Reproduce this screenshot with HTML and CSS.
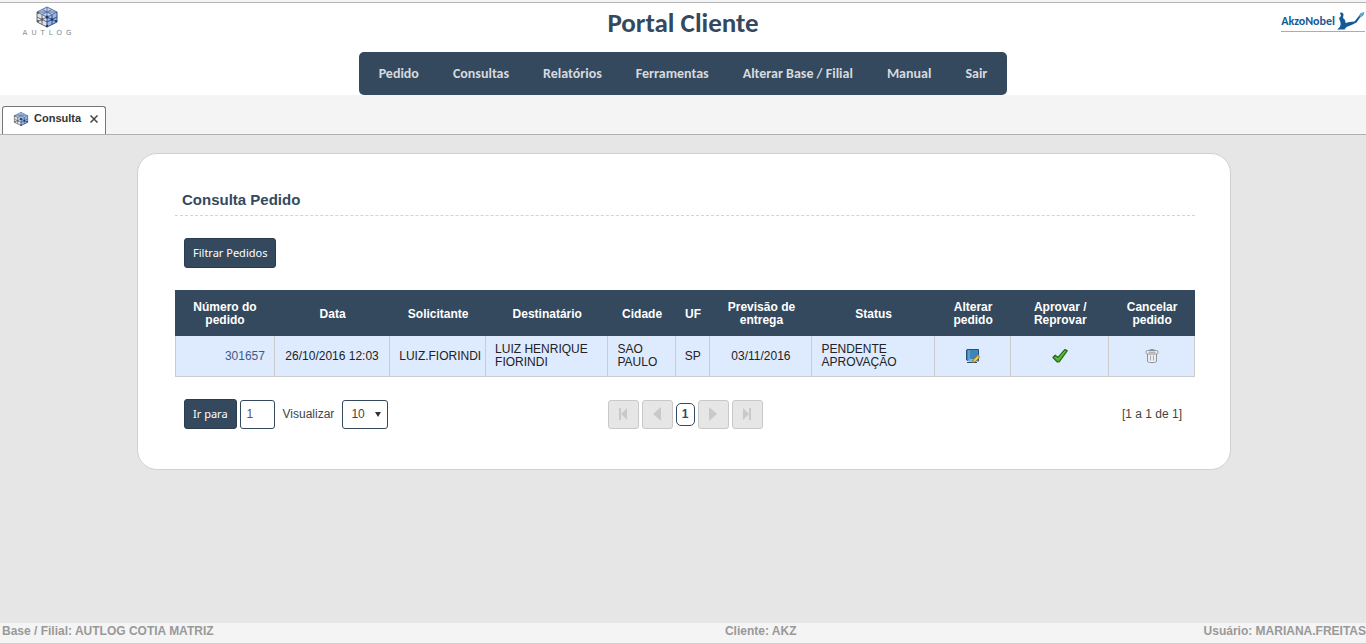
FILE: index.html
```html
<!DOCTYPE html>
<html lang="pt-BR">
<head>
<meta charset="utf-8">
<title>Portal Cliente</title>
<link rel="stylesheet" href="styles.css">
</head>
<body>
<svg class="defs" aria-hidden="true">
  <symbol id="cube" viewBox="0 0 24 22">
    <path d="M12 1 22 6 12 11 2 6z" fill="#c3d4ec"/>
    <path d="M2 6 12 11V21L2 16z" fill="#dfe1e4"/>
    <path d="M22 6 12 11V21L22 16z" fill="#9db6e0"/>
    <g fill="none">
      <path d="M12 1 2 6 12 11 22 6zM7 3.500 17 8.500M17 3.500 7 8.500M12 1V11M2 6H22" stroke="#5673a8"/>
      <path d="M2 6V16L12 21M7 8.500V18.500M2 11 12 16M2 16 12 11" stroke="#686d76"/>
      <path d="M22 6V16L12 21M12 11V21M17 8.500V18.500M22 11 12 16M22 16 12 11" stroke="#2d4c8f"/>
    </g>
    <g fill="#1e3768"><circle cx="12" cy="11" r="1.500"/><circle cx="12" cy="20" r="1.200"/><circle cx="21" cy="15" r="1.100"/><circle cx="17" cy="13.500" r="1.200"/></g>
    <g fill="#555a62"><circle cx="3" cy="7" r="1.100"/><circle cx="3" cy="15" r="1.100"/><circle cx="7" cy="13.500" r="1.200"/></g>
  </symbol>
</svg>
<header class="header">
  <div class="brand-row">
    <div class="autlog">
      <svg class="autlog-cube" aria-hidden="true"><use href="#cube"/></svg>
      <span class="autlog-name">AUTLOG</span>
    </div>
    <h1 class="title">Portal Cliente</h1>
    <div class="akzo">
      <span class="akzo-name">AkzoNobel</span>
      <svg class="akzo-figure" viewBox="0 0 28 20" aria-hidden="true">
        <path d="M3 2c2-1 3.500 0 3.500 2L6 7c2 1 2.500 3 2.500 5l4-1 5-.5 4-5 2-3 3.500-1-1 3-3 2-3.500 5-5 2.500-5 2-2 2.500H0c3-2 4-4 3.500-7L2 7l2-2z" fill="#155a97"/>
        <path d="m22 5 2-3 3.500-1-1 3-3 2z" fill="#5fa9d6"/>
      </svg>
    </div>
  </div>
  <nav class="menu">
    <a href="#">Pedido</a><a href="#">Consultas</a><a href="#">Relatórios</a><a href="#">Ferramentas</a><a href="#">Alterar Base / Filial</a><a href="#">Manual</a><a href="#">Sair</a>
  </nav>
</header>
<div class="tabs">
  <div class="tab">
    <svg class="tab-icon" aria-hidden="true"><use href="#cube"/></svg>
    <a class="tab-label" href="#">Consulta</a>
    <button class="tab-close" type="button" aria-label="Fechar"><svg viewBox="0 0 8 8"><path d="M.5.5l7 7M7.500.5l-7 7" stroke="#444" stroke-width="1.500"/></svg></button>
  </div>
</div>
<main class="content">
  <section class="card">
    <h2 class="card-title">Consulta Pedido</h2>
    <button class="btn filter" type="button">Filtrar Pedidos</button>
    <table class="orders">
      <colgroup><col class="c-num"><col class="c-date"><col class="c-req"><col class="c-dest"><col class="c-city"><col class="c-uf"><col class="c-eta"><col class="c-status"><col class="c-edit"><col class="c-ok"><col class="c-del"></colgroup>
      <thead>
        <tr><th>Número do<br>pedido</th><th>Data</th><th>Solicitante</th><th>Destinatário</th><th>Cidade</th><th>UF</th><th>Previsão de<br>entrega</th><th>Status</th><th>Alterar<br>pedido</th><th>Aprovar /<br>Reprovar</th><th>Cancelar<br>pedido</th></tr>
      </thead>
      <tbody>
        <tr>
          <td class="right"><a href="#">301657</a></td>
          <td class="center">26/10/2016 12:03</td>
          <td>LUIZ.FIORINDI</td>
          <td>LUIZ HENRIQUE<br>FIORINDI</td>
          <td>SAO<br>PAULO</td>
          <td>SP</td>
          <td class="center">03/11/2016</td>
          <td>PENDENTE<br>APROVAÇÃO</td>
          <td class="center"><button class="icon-btn" type="button" aria-label="Alterar pedido">
            <svg viewBox="0 0 16 16"><path d="M2 1.500h11.500v11.500H3.500L1.500 12V2z" fill="#3d86b8" stroke="#1d527f"/><path d="M4 2v9.500h9" fill="none" stroke="#7fb7dc"/><path d="M2.500 13h10" stroke="#e7eef4"/><path d="M2 14.500h10" stroke="#1d527f"/><path d="m7.500 14.500.8-2.800 4.200-4.200 2 2-4.200 4.200z" fill="#f1c83f" stroke="#8a6a2c" stroke-width=".8"/><path d="m12 8 1.200-1.200 2 2L14 10z" fill="#d98b5c"/></svg></button></td>
          <td class="center"><button class="icon-btn" type="button" aria-label="Aprovar ou reprovar">
            <svg viewBox="0 0 16 16"><path d="M1 9.500 3.200 7.200 6 9.500 13 1.500l2.300 1.200L7.200 14H5.300z" fill="#4fb02b" stroke="#256b19" stroke-width="1.200" stroke-linejoin="round"/><path d="M3 8.800l3 2.500 7-8.300" fill="none" stroke="#74cc4c" stroke-width=".8"/></svg></button></td>
          <td class="center"><button class="icon-btn" type="button" aria-label="Cancelar pedido">
            <svg viewBox="0 0 16 16" fill="none" stroke="#8d9096"><path d="M3.500 6v7.500c1 1.500 8 1.500 9 0V6" fill="#eceef0"/><rect x="2" y="2.500" width="12" height="3.500" rx="1.600" fill="#f4f4f5"/><path d="M5 2.500c1-1.500 5-1.500 6 0M4.500 4.200h7"/><path d="M6.500 7.500v5M9.500 7.500v5" stroke="#a5a8ad"/></svg></button></td>
        </tr>
      </tbody>
    </table>
    <div class="pager">
      <form class="pager-left">
        <button class="btn" type="button">Ir para</button>
        <input class="page-input" type="text" value="1" aria-label="Página">
        <label class="view-label" for="rows">Visualizar</label>
        <span class="select-wrap"><select id="rows" class="rows"><option>10</option></select><svg class="caret" viewBox="0 0 6 5" aria-hidden="true"><path d="M0 0h6L3 5z" fill="#333"/></svg></span>
      </form>
      <div class="pages">
        <button class="page-btn" type="button" disabled aria-label="Primeira"><svg viewBox="0 0 12 14"><path d="M3 1v12" stroke="#c9c9c9" stroke-width="2"/><path d="M10 1v12L4 7z" fill="#c9c9c9"/></svg></button>
        <button class="page-btn" type="button" disabled aria-label="Anterior"><svg viewBox="0 0 12 14"><path d="M10 0v14L2 7z" fill="#c9c9c9"/></svg></button>
        <button class="page-current" type="button">1</button>
        <button class="page-btn" type="button" disabled aria-label="Próxima"><svg viewBox="0 0 12 14"><path d="M2 0v14l8-7z" fill="#c9c9c9"/></svg></button>
        <button class="page-btn" type="button" disabled aria-label="Última"><svg viewBox="0 0 12 14"><path d="M9 1v12" stroke="#c9c9c9" stroke-width="2"/><path d="M2 1v12l6-6z" fill="#c9c9c9"/></svg></button>
      </div>
      <span class="range">[1 a 1 de 1]</span>
    </div>
  </section>
</main>
<footer class="footer">
  <span>Base / Filial: AUTLOG COTIA MATRIZ</span>
  <span>Cliente: AKZ</span>
  <span class="user">Usuário: MARIANA.FREITAS</span>
</footer>
</body>
</html>
```
FILE: styles.css
```css
* { box-sizing: border-box; }

body {
  margin: 0;
  min-height: 100vh;
  display: flex;
  flex-direction: column;
  overflow-x: hidden;
  background: #e6e6e6;
  color: #222;
  font: 12px/13px "Liberation Sans", Arial, sans-serif;
}

a { color: inherit; text-decoration: none; }
button, input, select { font-family: inherit; margin: 0; }
button { cursor: pointer; }
svg { display: block; }
.defs { position: absolute; width: 0; height: 0; }

.header {
  display: flex;
  flex-direction: column;
  align-items: center;
  border-top: 2px solid #f4f4f4;
  background: #fff;
}
.brand-row {
  width: 100%;
  height: 50px;
  display: grid;
  grid-template-columns: 1fr auto 1fr;
  align-items: start;
  border-top: 1px solid #b4b4b4;
}
.autlog {
  width: 56px;
  margin: 3px 0 0 19px;
  display: flex;
  flex-direction: column;
  align-items: center;
}
.autlog-cube { width: 24px; height: 22px; }
.autlog-name {
  color: #85888f;
  font: 7px/10px "DejaVu Sans", sans-serif;
  letter-spacing: 4px;
  padding-left: 4px;
}
.title {
  margin: 3px 0 0;
  color: #34495e;
  font: bold 27px/33px Carlito, Calibri, "Open Sans", sans-serif;
}
.akzo {
  justify-self: end;
  display: flex;
  align-items: center;
  gap: 2px;
  margin: 8px 1px 0 0;
  border-bottom: 1px solid #8fb3d3;
}
.akzo-name {
  color: #155a97;
  font: bold 12px/18px Carlito, Calibri, "Open Sans", sans-serif;
}
.akzo-figure { width: 28px; height: 20px; }

.menu {
  display: flex;
  padding: 0 3px;
  border-radius: 5px;
  background: #34495e;
}
.menu a {
  padding: 0 17px;
  color: #d6dade;
  font: bold 14px/43px Carlito, Calibri, "Open Sans", sans-serif;
}

.tabs {
  padding: 11px 2px 0;
  border-bottom: 1px solid #b0b0b0;
  background: #f4f4f4;
}
.tab {
  width: 104px;
  height: 28px;
  display: flex;
  align-items: center;
  padding: 0 7px 4px 10px;
  border: 1px solid #777;
  border-bottom: 0;
  border-radius: 3px 3px 0 0;
  background: #fff;
}
.tab-icon { width: 16px; height: 16px; margin-right: 5px; }
.tab-label { flex: 1; color: #333; font-weight: bold; font-size: 11px; }
.tab-close { padding: 0; border: 0; background: none; }
.tab-close svg { width: 8px; height: 8px; }

.content { flex: 1; padding: 18px 135px 18px 137px; }
.card {
  padding: 36px 35px 40px 37px;
  border: 1px solid #d0d0d0;
  border-radius: 20px;
  background: #fff;
}
.card-title {
  margin: 0;
  padding: 2px 7px 7px;
  border-bottom: 1px dashed #d4d4d4;
  color: #34495e;
  font-size: 15px;
  line-height: 16px;
}
.btn {
  height: 30px;
  padding: 0 8px;
  border: 1px solid #2a3c4e;
  border-radius: 3px;
  background: #34495e;
  color: #fff;
  font: 11px/28px "Noto Sans", sans-serif;
}
.filter { display: block; margin: 22px 0 22px 9px; }

.orders { width: 100%; table-layout: fixed; border-collapse: separate; border-spacing: 0; }
.c-num { width: 9.8%; }
.c-date { width: 11.3%; }
.c-req { width: 9.4%; }
.c-dest { width: 12%; }
.c-city { width: 6.6%; }
.c-uf { width: 3.4%; }
.c-eta { width: 10%; }
.c-status { width: 12%; }
.c-edit { width: 7.5%; }
.c-ok { width: 9.6%; }
.c-del { width: 8.4%; }
.orders th {
  height: 46px;
  padding: 2px 0 0;
  background: #34495e;
  color: #fff;
}
.orders td {
  height: 41px;
  padding: 0 9px;
  border: solid #ccc;
  border-width: 0 1px 1px 0;
  background: #deebff;
  white-space: nowrap;
}
.orders td:first-child { border-left-width: 1px; }
.orders .right { text-align: right; color: #3f5a86; }
.orders .center { padding: 0; text-align: center; }
.icon-btn { padding: 0; border: 0; background: none; vertical-align: middle; }
.icon-btn svg { width: 16px; height: 16px; }

.pager {
  display: grid;
  grid-template-columns: 1fr auto 1fr;
  align-items: center;
  padding: 22px 9px 0;
}
.pager-left { display: flex; align-items: center; }
.page-input {
  width: 35px;
  height: 29px;
  margin-left: 3px;
  padding: 0 6px;
  border: 1px solid #34495e;
  border-radius: 3px;
  color: #555;
  font-size: 12px;
}
.view-label { margin: 0 8px; color: #444; }
.select-wrap { position: relative; }
.rows {
  width: 46px;
  height: 29px;
  padding: 0 8px;
  appearance: none;
  border: 1px solid #34495e;
  border-radius: 3px;
  background: #fff;
  color: #444;
  font-size: 12px;
}
.caret { position: absolute; right: 7px; top: 12px; width: 6px; height: 5px; pointer-events: none; }
.pages { display: flex; align-items: center; gap: 3px; }
.page-btn {
  width: 31px;
  height: 29px;
  display: grid;
  place-items: center;
  padding: 0;
  border: 1px solid #c9c9c9;
  border-radius: 3px;
  background: #e6e6e6;
}
.page-btn svg { width: 12px; height: 14px; }
.page-current {
  width: 19px;
  height: 23px;
  padding: 0;
  border: 1px solid #34495e;
  border-radius: 5px;
  background: #fff;
  color: #34495e;
  font-weight: bold;
  font-size: 12px;
}
.range { justify-self: end; padding-right: 4px; color: #444; }

.footer {
  display: grid;
  grid-template-columns: 53% auto 1fr;
  padding: 1px 0 5px 2px;
  border-bottom: 1px solid #d0d0d0;
  background: #f4f4f4;
  color: #999;
  font-weight: bold;
  line-height: 14px;
}
.user { justify-self: end; }
```
